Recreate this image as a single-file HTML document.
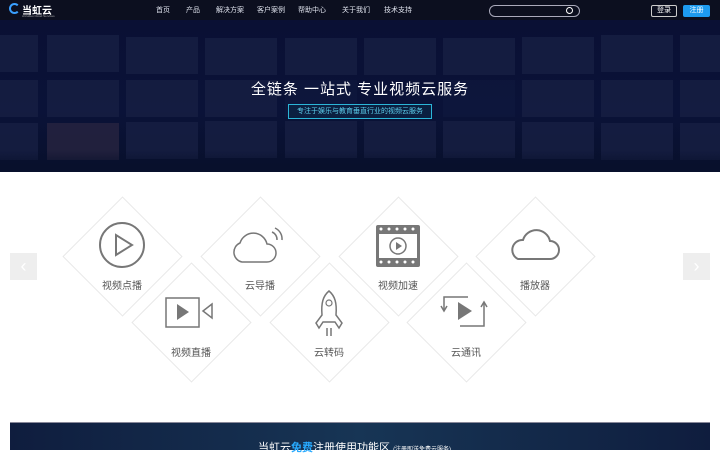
<!DOCTYPE html><html><head><meta charset="utf-8"><style>
*{margin:0;padding:0;box-sizing:border-box}
body{width:720px;height:450px;overflow:hidden;background:#fff;font-family:"Liberation Sans","Noto Sans CJK SC",sans-serif;position:relative}
.hdr{position:absolute;left:0;top:0;width:720px;height:20px;background:#0c0f1f}
.nav{position:absolute;top:5px;font-size:7px;color:#dfe3ee}
.hero{position:absolute;left:0;top:20px;width:720px;height:152px;background:linear-gradient(180deg,#0a1034 0%,#0a1238 60%,#08102c 100%);overflow:hidden}
.t{position:absolute;width:72px;height:37px;background:#182044;opacity:.75}
.d{position:absolute;width:85px;height:85px;border:1px solid #e8e8e8;transform:rotate(45deg)}
.lb{position:absolute;font-size:10px;color:#555;width:100px;text-align:center}
.ic{position:absolute}
</style></head><body>
<div class="hdr"></div>
<div style="position:absolute;left:9px;top:3px;width:11px;height:11px;border:2px solid #3aa0ff;border-radius:50%;border-right-color:transparent"></div>
<div style="position:absolute;left:22px;top:2px;font-size:10px;color:#fff;font-weight:bold">当虹云</div>
<div style="position:absolute;left:22px;top:14px;font-size:3px;color:#aaa">Arcvideo Cloud Services</div>
<div class="nav" style="left:156px">首页</div><div class="nav" style="left:186px">产品</div><div class="nav" style="left:216px">解决方案</div><div class="nav" style="left:257px">客户案例</div><div class="nav" style="left:298px">帮助中心</div><div class="nav" style="left:342px">关于我们</div><div class="nav" style="left:384px">技术支持</div>
<div style="position:absolute;left:489px;top:5px;width:91px;height:12px;border:1px solid #aab;border-radius:6px"></div>
<div style="position:absolute;left:566px;top:7px;width:7px;height:7px;border:1px solid #fff;border-radius:50%"></div>
<div style="position:absolute;left:651px;top:5px;width:26px;height:12px;border:1px solid #ccc;border-radius:2px;color:#fff;font-size:7px;text-align:center;line-height:10px">登录</div>
<div style="position:absolute;left:683px;top:5px;width:27px;height:12px;background:#1d9bf0;border-radius:2px;color:#fff;font-size:7px;text-align:center;line-height:12px">注册</div>
<div class="hero">
<div class="t" style="left:0;top:15px;width:38px"></div><div class="t" style="left:47px;top:15px"></div><div class="t" style="left:126px;top:17px"></div><div class="t" style="left:205px;top:18px"></div><div class="t" style="left:285px;top:18px"></div><div class="t" style="left:364px;top:18px"></div><div class="t" style="left:443px;top:18px"></div><div class="t" style="left:522px;top:17px"></div><div class="t" style="left:601px;top:15px"></div><div class="t" style="left:680px;top:15px"></div>
<div class="t" style="left:0;top:60px;width:38px"></div><div class="t" style="left:47px;top:60px"></div><div class="t" style="left:126px;top:60px"></div><div class="t" style="left:205px;top:60px"></div><div class="t" style="left:285px;top:60px;opacity:.3"></div><div class="t" style="left:443px;top:60px;opacity:.3"></div><div class="t" style="left:522px;top:60px"></div><div class="t" style="left:601px;top:60px"></div><div class="t" style="left:680px;top:60px"></div>
<div class="t" style="left:0;top:103px;width:38px"></div><div class="t" style="left:47px;top:103px;background:#2a2642"></div><div class="t" style="left:126px;top:102px"></div><div class="t" style="left:205px;top:101px"></div><div class="t" style="left:285px;top:101px"></div><div class="t" style="left:364px;top:101px"></div><div class="t" style="left:443px;top:101px"></div><div class="t" style="left:522px;top:102px"></div><div class="t" style="left:601px;top:103px"></div><div class="t" style="left:680px;top:103px"></div>
<div style="position:absolute;left:0;top:130px;width:720px;height:22px;background:linear-gradient(transparent,#08102c)"></div>
</div>
<div style="position:absolute;left:0;top:78px;width:720px;text-align:center;font-size:15px;color:#fff;letter-spacing:1px">全链条 一站式 专业视频云服务</div>
<div style="position:absolute;left:288px;top:104px;width:144px;height:15px;border:1px solid #2bb5d8;color:#5fd0ee;font-size:7px;text-align:center;line-height:13px;background:rgba(10,40,70,.6)">专注于娱乐与教育垂直行业的视频云服务</div>
<div style="position:absolute;left:10px;top:253px;width:27px;height:27px;background:#eee;color:#fff;font-size:18px;text-align:center;line-height:27px">‹</div>
<div style="position:absolute;left:683px;top:253px;width:27px;height:27px;background:#eee;color:#fff;font-size:18px;text-align:center;line-height:27px">›</div>
<div class="d" style="left:80px;top:214px"></div><div class="d" style="left:218px;top:214px"></div><div class="d" style="left:356px;top:214px"></div><div class="d" style="left:493px;top:214px"></div>
<div class="d" style="left:149px;top:280px;background:#fff"></div><div class="d" style="left:287px;top:280px;background:#fff"></div><div class="d" style="left:424px;top:280px;background:#fff"></div>
<div class="lb" style="left:72px;top:277px">视频点播</div><div class="lb" style="left:210px;top:277px">云导播</div><div class="lb" style="left:348px;top:277px">视频加速</div><div class="lb" style="left:485px;top:277px">播放器</div>
<div class="lb" style="left:141px;top:344px">视频直播</div><div class="lb" style="left:279px;top:344px">云转码</div><div class="lb" style="left:416px;top:344px">云通讯</div>
<svg class="ic" style="left:0;top:0" width="720" height="450" fill="none" stroke="#777" stroke-width="2">
<circle cx="122" cy="245" r="22"/><path d="M116 235v20l16-10z"/>
<path d="M242 262h25a9 9 0 0 0 0-18a14 14 0 0 0-27-1a10 10 0 0 0 2 19z" stroke-width="1.5"/><path d="M272 232a8 8 0 0 1 5 8M275 228a12 12 0 0 1 7 12" stroke-width="1.5"/>
<rect x="376" y="225" width="44" height="42" rx="2" fill="#777" stroke="none"/><rect x="379" y="234" width="38" height="24" fill="#fff" stroke="none"/>
<g fill="#fff" stroke="none"><circle cx="381" cy="229" r="1.5"/><circle cx="389" cy="229" r="1.5"/><circle cx="397" cy="229" r="1.5"/><circle cx="405" cy="229" r="1.5"/><circle cx="413" cy="229" r="1.5"/><circle cx="381" cy="262" r="1.5"/><circle cx="389" cy="262" r="1.5"/><circle cx="397" cy="262" r="1.5"/><circle cx="405" cy="262" r="1.5"/><circle cx="413" cy="262" r="1.5"/></g>
<circle cx="398" cy="246" r="8" stroke-width="1.5"/><path d="M396 242v8l6-4z" fill="#777" stroke="none"/>
<path d="M518 259h32a9 9 0 0 0 0-18a14 14 0 0 0-27-1a10 10 0 0 0-5 19z"/>
<rect x="166" y="298" width="33" height="29" stroke-width="1.5"/><path d="M177 304v16l12-8z" fill="#777" stroke="none"/><path d="M212 304l-9 7l9 7z" stroke-width="1.5"/>
<path d="M329 291c-6 5-8 12-7 24l-6 8l3 5l4-6h12l4 6l3-5l-6-8c1-12-1-19-7-24z" stroke-width="1.5"/><circle cx="329" cy="303" r="3" stroke-width="1.2"/><path d="M327 328v8M331 328v8" stroke-width="1.5"/>
<path d="M444 311v-14h24M484 302v24h-24" stroke-width="1.5"/><path d="M441 306l3 5l3-5M481 307l3-5l3 5" stroke-width="1.5"/><path d="M458 302v18l14-9z" fill="#777" stroke="none"/>
</svg>
<div style="position:absolute;left:10px;top:422px;width:700px;height:28px;background:linear-gradient(90deg,#0f1d3e,#173555 50%,#0f1d3e);border-top:1px solid #889"></div>
<div style="position:absolute;left:258px;top:439px;font-size:11px;color:#fff">当虹云<span style="color:#28aaff;font-weight:bold">免费</span>注册使用功能区 <span style="font-size:6px">(注册即送免费云服务)</span></div>
</body></html>
